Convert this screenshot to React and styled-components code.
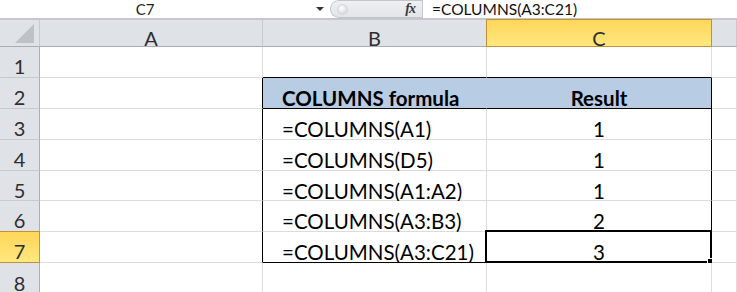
import React from "react";
import styled, { createGlobalStyle, css } from "styled-components";

const Global = createGlobalStyle`
  html, body { margin: 0; padding: 0; background: #fff; }
  #root { width: 737px; height: 292px; overflow: hidden; }
`;

const Sheet = styled.div`
  width: 737px;
  height: 292px;
  overflow: hidden;
  font-family: Lato, "Liberation Sans", sans-serif;
  background: #fff;
  display: flex;
  flex-direction: column;
`;

const FormulaBar = styled.div`
  display: flex;
  height: 22px;
  border-bottom: 1px solid #c3c7cc;
  background: #fff;
  font-family: Lato, "Liberation Sans", sans-serif;
`;

const NameBox = styled.div`
  width: 330px;
  display: flex;
  align-items: center;
  font-size: 15px;
  color: #1e1e1e;
`;

const NameText = styled.span`
  flex: 1;
  text-align: center;
  padding-right: 26px;
`;

const DropArrow = styled.span`
  width: 0;
  height: 0;
  border-left: 4px solid transparent;
  border-right: 4px solid transparent;
  border-top: 4px solid #333;
  margin-right: 6px;
`;

const FxPill = styled.div`
  width: 92px;
  display: flex;
  align-items: center;
  justify-content: space-between;
  box-sizing: border-box;
  border: 1px solid #c2c6cb;
  border-right: none;
  border-radius: 11px 0 0 11px;
  background: linear-gradient(#eef0f2, #e2e5e9);
  padding: 0 7px 0 6px;
`;

const Grip = styled.span`
  width: 9px;
  height: 9px;
  border-radius: 50%;
  background: radial-gradient(circle at 40% 35%, #fff, #c9cdd2);
  border: 1px solid #d2d5d9;
`;

const Fx = styled.span`
  font-family: "Liberation Serif", serif;
  font-style: italic;
  font-weight: 700;
  font-size: 14px;
  color: #3a3a3a;
  letter-spacing: -1px;
`;

const FormulaInput = styled.div`
  flex: 1;
  display: flex;
  align-items: center;
  border-left: 1px solid #c2c6cb;
  padding-left: 9px;
  font-size: 15.5px;
  color: #111;
`;

const Band = styled.div`
  height: 4px;
  background: #e4e6e9;
`;

const Grid = styled.div`
  display: grid;
  grid-template-columns: 40px 223px 224px 225px 1fr;
  grid-template-rows: 28px 31px 31px 31px 31px 30px 31px 31px 1fr;
  flex: 1;
`;

const selectedHeader = css`
  background: linear-gradient(#ffd659, #ffe77f);
  border-color: #c39237;
`;

const ColHead = styled.div`
  box-sizing: border-box;
  background: #dfe2e7;
  border-right: 1px solid #c6cace;
  border-bottom: 1px solid #a9aeb4;
  border-top: 1px solid #c6cace;
  display: flex;
  align-items: center;
  justify-content: center;
  font-size: 20px;
  color: #2e2e2e;
  padding-top: 9px;
  ${(p) => p.$sel && selectedHeader}
  ${(p) => p.$sel && css`border-left: 1px solid #c39237; margin-left: -1px;`}
`;

const Corner = styled(ColHead)`
  position: relative;
  &::after {
    content: "";
    position: absolute;
    right: 5px;
    bottom: 3px;
    width: 0;
    height: 0;
    border-left: 19px solid transparent;
    border-bottom: 19px solid #bec2c7;
  }
`;

const RowHead = styled.div`
  box-sizing: border-box;
  background: #dfe2e7;
  border-right: 1px solid #a9aeb4;
  border-bottom: 1px solid #c6cace;
  display: flex;
  align-items: center;
  justify-content: center;
  font-size: 20px;
  color: #2e2e2e;
  padding-top: 8px;
  ${(p) => p.$sel && selectedHeader}
  ${(p) => p.$sel && css`border-right-color: #c39237; border-top: 1px solid #c39237; margin-top: -1px;`}
`;

const Cell = styled.div`
  box-sizing: border-box;
  position: relative;
  border-right: 1px solid ${(p) => p.$right || "#dadcde"};
  border-bottom: 1px solid ${(p) => p.$bottom || "#dadcde"};
  background: ${(p) => p.$fill || "#fff"};
  display: flex;
  align-items: center;
  justify-content: ${(p) => (p.$center ? "center" : "flex-start")};
  padding: 10px 0 0 ${(p) => (p.$center ? "0" : "19px")};
  font-size: 20.5px;
  font-weight: ${(p) => (p.$bold ? 700 : 400)};
  color: #000;
  white-space: nowrap;
`;

const Selection = styled.span`
  position: absolute;
  left: -2px;
  top: -2px;
  right: -1px;
  bottom: -1px;
  border: 2px solid #000;
  pointer-events: none;
  &::after {
    content: "";
    position: absolute;
    right: -4px;
    bottom: -4px;
    width: 5px;
    height: 5px;
    background: #000;
    border: 1px solid #fff;
  }
`;

const BLACK = "#000";
const BLUE = "#b8cce4";

const data = [
  ["=COLUMNS(A1)", "1"],
  ["=COLUMNS(D5)", "1"],
  ["=COLUMNS(A1:A2)", "1"],
  ["=COLUMNS(A3:B3)", "2"],
  ["=COLUMNS(A3:C21)", "3"],
];

export default function App() {
  const rows = [];
  rows.push(
    <React.Fragment key="r1">
      <RowHead>1</RowHead>
      <Cell />
      <Cell $bottom={BLACK} />
      <Cell $bottom={BLACK} />
      <Cell />
    </React.Fragment>
  );
  rows.push(
    <React.Fragment key="r2">
      <RowHead>2</RowHead>
      <Cell $right={BLACK} />
      <Cell $fill={BLUE} $right={BLUE} $bottom={BLACK} $bold>
        COLUMNS formula
      </Cell>
      <Cell $fill={BLUE} $right={BLACK} $bottom={BLACK} $bold $center>
        Result
      </Cell>
      <Cell />
    </React.Fragment>
  );
  data.forEach(([f, r], i) => {
    const n = i + 3;
    const last = n === 7;
    rows.push(
      <React.Fragment key={n}>
        <RowHead $sel={last}>{n}</RowHead>
        <Cell $right={BLACK} />
        <Cell $bottom={last ? BLACK : undefined}>{f}</Cell>
        <Cell $right={BLACK} $bottom={last ? BLACK : undefined} $center>
          {r}
          {last && <Selection />}
        </Cell>
        <Cell />
      </React.Fragment>
    );
  });
  rows.push(
    <React.Fragment key="r8">
      <RowHead>8</RowHead>
      <Cell />
      <Cell />
      <Cell />
      <Cell />
    </React.Fragment>
  );

  return (
    <>
      <Global />
      <Sheet>
        <FormulaBar>
          <NameBox>
            <NameText>C7</NameText>
            <DropArrow />
          </NameBox>
          <FxPill>
            <Grip />
            <Fx>fx</Fx>
          </FxPill>
          <FormulaInput>=COLUMNS(A3:C21)</FormulaInput>
        </FormulaBar>
        <Band />
        <Grid>
          <Corner />
          <ColHead>A</ColHead>
          <ColHead>B</ColHead>
          <ColHead $sel>C</ColHead>
          <ColHead />
          {rows}
        </Grid>
      </Sheet>
    </>
  );
}
